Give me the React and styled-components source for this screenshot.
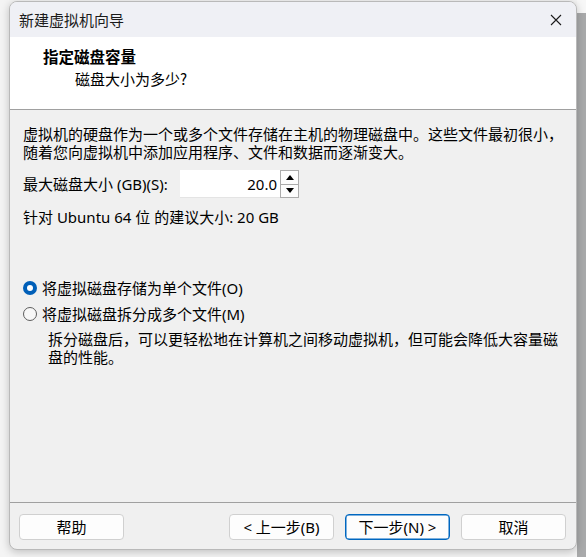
import React from "react";
import styled, { createGlobalStyle } from "styled-components";

const Global = createGlobalStyle`
  html, body { margin: 0; padding: 0; background: #f4f4f4; }
  body {
    font-family: "Noto Sans", "Noto Sans CJK SC", sans-serif;
    font-size: 15px;
    color: #000;
    -webkit-font-smoothing: antialiased;
  }
  #root { width: 586px; height: 557px; overflow: hidden; }
`;

const Page = styled.div`
  display: flex;
  width: 586px;
  height: 557px;
  padding-top: 1px;
  box-sizing: border-box;
`;

const Gutter = styled.div`
  width: 9px;
  flex: none;
`;

const Backdrop = styled.div`
  flex: 1;
  display: flex;
  flex-direction: column;
  margin-top: -1px;
`;

const BackdropTop = styled.div`
  height: 13px;
  background: #f7f7f7;
`;

const BackdropGrey = styled.div`
  flex: 1;
  background: #a9aaab;
`;

const Window = styled.div`
  width: 568px;
  height: 549px;
  flex: none;
  box-sizing: border-box;
  border: 1px solid #b9b9b9;
  border-radius: 8px;
  overflow: hidden;
  display: flex;
  flex-direction: column;
  background: #f0f0f0;
  box-shadow: 0 2px 8px rgba(0, 0, 0, 0.22);
  position: relative;
  z-index: 1;
`;

const TitleBar = styled.div`
  height: 35px;
  flex: none;
  background: #eff0f5;
  display: flex;
  align-items: center;
  justify-content: space-between;
  padding: 0 14px 0 9px;
`;

const TitleText = styled.span`
  font-family: "Noto Sans CJK SC", sans-serif;
  font-size: 15px;
  color: #1b1b1b;
  line-height: 20px;
`;

const CloseButton = styled.div`
  width: 12px;
  height: 12px;
  display: flex;
  align-items: center;
  justify-content: center;
  margin-top: 1px;
`;

const Header = styled.div`
  flex: none;
  background: #ffffff;
  border-bottom: 1px solid #a0a0a0;
  padding-top: 9px;
  box-sizing: border-box;
  height: 73px;
`;

const HeaderTitle = styled.div`
  font-family: "Noto Sans CJK SC", sans-serif;
  font-weight: 700;
  font-size: 15.5px;
  line-height: 20px;
  padding-left: 33px;
`;

const HeaderSub = styled.div`
  font-family: "Noto Sans CJK SC", sans-serif;
  font-size: 15px;
  line-height: 20px;
  padding-left: 65px;
  margin-top: 3px;
`;

const Body = styled.div`
  flex: 1;
  padding: 15px 13px 0 13px;
  display: flex;
  flex-direction: column;
`;

const Lines = styled.div`
  display: flex;
  flex-direction: column;
  padding-left: ${(p) => p.$indent || 0}px;
  margin-top: ${(p) => p.$top || 0}px;
`;

const Line = styled.div`
  height: 18px;
  line-height: 18px;
  white-space: nowrap;
`;

const SizeRow = styled.div`
  display: flex;
  align-items: center;
  margin-top: 9px;
  height: 28px;
`;

const Label = styled.span`
  width: 157px;
  flex: none;
  line-height: 18px;
`;

const SpinInput = styled.div`
  width: 100px;
  height: 28px;
  background: #fff;
  box-sizing: border-box;
  display: flex;
  align-items: center;
  justify-content: flex-end;
  padding-right: 3px;
  border-bottom: 1px solid #e4e4e4;
`;

const SpinButtons = styled.div`
  width: 19px;
  height: 28px;
  display: flex;
  flex-direction: column;
  box-sizing: border-box;
  border: 1px solid #acacac;
  background: #fdfdfd;
`;

const SpinBtn = styled.div`
  flex: 1;
  display: flex;
  align-items: center;
  justify-content: center;
  border-top: ${(p) => (p.$bottom ? "1px solid #acacac" : "none")};
`;

const Recommend = styled.div`
  margin-top: 10px;
  line-height: 18px;
`;

const RadioGroup = styled.div`
  margin-top: 53px;
  display: flex;
  flex-direction: column;
  gap: 8px;
`;

const RadioRow = styled.div`
  display: flex;
  align-items: center;
  line-height: 18px;
  gap: 5px;
`;

const RadioDot = styled.span`
  width: 14px;
  height: 14px;
  box-sizing: border-box;
  border-radius: 50%;
  flex: none;
  background: ${(p) => (p.$checked ? "#005fb8" : "#f7f7f7")};
  border: ${(p) => (p.$checked ? "none" : "1px solid #5d5d5d")};
  display: flex;
  align-items: center;
  justify-content: center;
  &::after {
    content: "";
    display: ${(p) => (p.$checked ? "block" : "none")};
    width: 6px;
    height: 6px;
    border-radius: 50%;
    background: #fff;
  }
`;

const Footer = styled.div`
  height: 47px;
  flex: none;
  box-sizing: border-box;
  border-top: 1px solid #a0a0a0;
  padding: 11px 10px 0 9px;
  display: flex;
  align-items: flex-start;
`;

const Spacer = styled.div`
  flex: 1;
`;

const ButtonSet = styled.div`
  display: flex;
  gap: 11px;
`;

const Button = styled.div`
  width: 105px;
  height: 26px;
  box-sizing: border-box;
  border-radius: 4px;
  background: #fdfdfd;
  border: 1px solid ${(p) => (p.$default ? "#0067c0" : "#d0d0d0")};
  box-shadow: ${(p) => (p.$default ? "inset 0 0 0 0.5px #0067c0" : "none")};
  display: flex;
  align-items: center;
  justify-content: center;
  font-size: 15px;
  line-height: 18px;
  color: #000;
`;

const Cjk = styled.span`
  font-family: "Noto Sans CJK SC", sans-serif;
`;

export default function App() {
  return (
    <>
      <Global />
      <Page>
        <Gutter />
        <Window>
          <TitleBar>
            <TitleText>新建虚拟机向导</TitleText>
            <CloseButton>
              <svg width="12" height="12" viewBox="0 0 12 12">
                <path d="M1 1 L11 11 M11 1 L1 11" stroke="#1b1b1b" strokeWidth="1.1" fill="none" />
              </svg>
            </CloseButton>
          </TitleBar>
          <Header>
            <HeaderTitle>指定磁盘容量</HeaderTitle>
            <HeaderSub>磁盘大小为多少?</HeaderSub>
          </Header>
          <Body>
            <Lines>
              <Line>虚拟机的硬盘作为一个或多个文件存储在主机的物理磁盘中。这些文件最初很小，</Line>
              <Line>随着您向虚拟机中添加应用程序、文件和数据而逐渐变大。</Line>
            </Lines>
            <SizeRow>
              <Label>最大磁盘大小 (GB)(S):</Label>
              <SpinInput>20.0</SpinInput>
              <SpinButtons>
                <SpinBtn>
                  <svg width="8" height="5" viewBox="0 0 8 5">
                    <path d="M0 5 L4 0 L8 5 Z" fill="#000" />
                  </svg>
                </SpinBtn>
                <SpinBtn $bottom>
                  <svg width="8" height="5" viewBox="0 0 8 5">
                    <path d="M0 0 L8 0 L4 5 Z" fill="#000" />
                  </svg>
                </SpinBtn>
              </SpinButtons>
            </SizeRow>
            <Recommend>针对 Ubuntu 64 位 的建议大小: 20 GB</Recommend>
            <RadioGroup>
              <RadioRow>
                <RadioDot $checked />
                <span>将虚拟磁盘存储为单个文件(O)</span>
              </RadioRow>
              <RadioRow>
                <RadioDot />
                <span>将虚拟磁盘拆分成多个文件(M)</span>
              </RadioRow>
            </RadioGroup>
            <Lines $indent={25} $top={7}>
              <Line>拆分磁盘后，可以更轻松地在计算机之间移动虚拟机，但可能会降低大容量磁</Line>
              <Line>盘的性能。</Line>
            </Lines>
          </Body>
          <Footer>
            <Button>
              <Cjk>帮助</Cjk>
            </Button>
            <Spacer />
            <ButtonSet>
              <Button>&lt; 上一步(B)</Button>
              <Button $default>下一步(N) &gt;</Button>
              <Button>
                <Cjk>取消</Cjk>
              </Button>
            </ButtonSet>
          </Footer>
        </Window>
        <Backdrop>
          <BackdropTop />
          <BackdropGrey />
        </Backdrop>
      </Page>
    </>
  );
}
